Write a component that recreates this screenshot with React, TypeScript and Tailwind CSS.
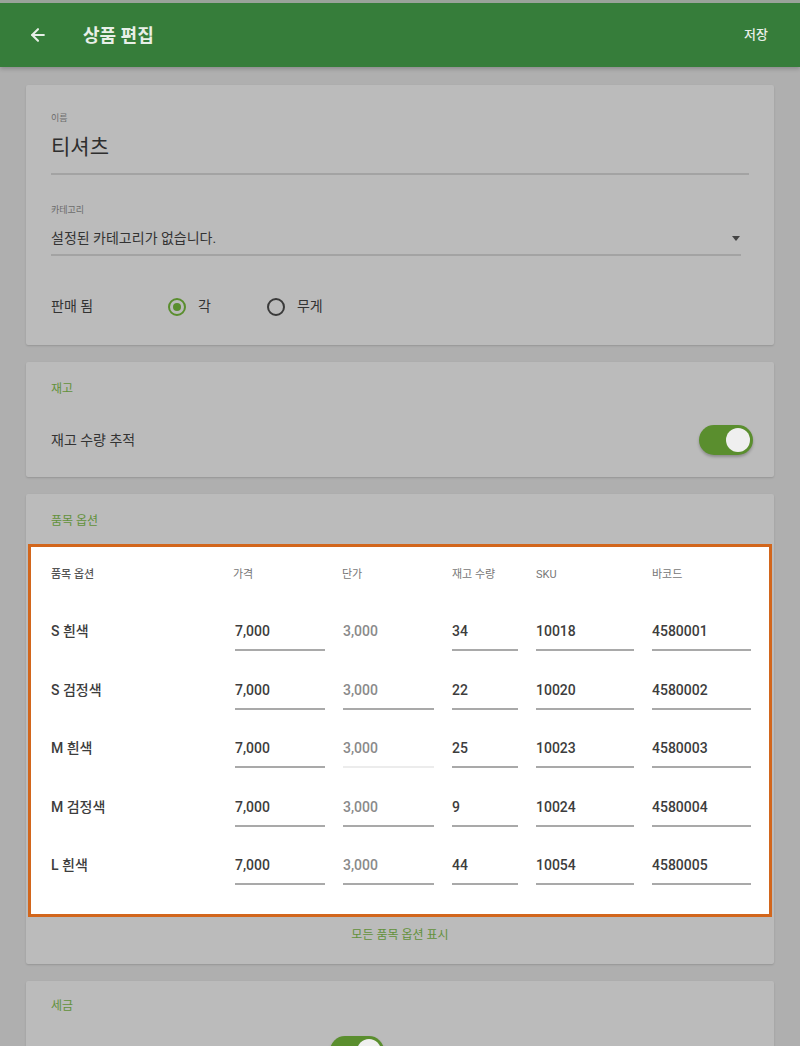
import { ArrowLeft } from "lucide-react";

const font = "font-['Roboto','Noto_Sans_CJK_KR',sans-serif]";

const rows = [
  { name: "S 흰색", price: "7,000", cost: "3,000", stock: "34", sku: "10018", barcode: "4580001", costLine: "none" },
  { name: "S 검정색", price: "7,000", cost: "3,000", stock: "22", sku: "10020", barcode: "4580002", costLine: "full" },
  { name: "M 흰색", price: "7,000", cost: "3,000", stock: "25", sku: "10023", barcode: "4580003", costLine: "faint" },
  { name: "M 검정색", price: "7,000", cost: "3,000", stock: "9", sku: "10024", barcode: "4580004", costLine: "full" },
  { name: "L 흰색", price: "7,000", cost: "3,000", stock: "44", sku: "10054", barcode: "4580005", costLine: "full" },
];

function Cell({ value, muted, line = "full" }: { value: string; muted?: boolean; line?: string }) {
  const border =
    line === "none" ? "border-transparent" : line === "faint" ? "border-[#ececec]" : "border-[#a9a9a9]";
  return (
    <div className={`border-b-2 pb-[8px] ${border}`}>
      <span className={`block text-[14px] leading-[20px] font-medium ${muted ? "text-[#8a8a8a]" : "text-[#3d3d3d]"}`}>
        {value}
      </span>
    </div>
  );
}

function Toggle() {
  return (
    <div className="relative w-[54px] h-[30px] rounded-full bg-[#5a8e2e] shadow-[0_2px_3px_rgba(0,0,0,0.25)]">
      <div className="absolute right-[3px] top-[3px] w-[24px] h-[24px] rounded-full bg-[#efefef]" />
    </div>
  );
}

export default function App() {
  return (
    <div className={`w-[800px] h-[1046px] overflow-hidden bg-[#afafaf] ${font}`}>
      {/* App bar */}
      <header className="h-[67px] border-t-[3px] border-[#9aa39a] bg-[#367d3a] flex items-center px-[28px] shadow-[0_2px_4px_rgba(0,0,0,0.2)]">
        <ArrowLeft className="w-[20px] h-[20px] text-[#e8efe8]" strokeWidth={2.5} />
        <h1 className="ml-[35px] text-[18px] font-bold text-[#e8efe8]">상품 편집</h1>
        <button className="ml-auto mr-[4px] text-[13px] font-medium text-[#e8efe8]">저장</button>
      </header>

      <main className="px-[26px] pt-[18px] flex flex-col gap-[17px]">
        {/* Basic info */}
        <section className="h-[260px] bg-[#bbbbbb] rounded-[2px] shadow-[0_1px_2px_rgba(0,0,0,0.15)] px-[25px] pt-[27px]">
          <p className="text-[9px] leading-[12px] text-[#6b6b6b]">이름</p>
          <p className="mt-[9px] text-[21px] leading-[28px] text-[#2e2e2e]">티셔츠</p>
          <div className="mt-[12px] h-[2px] bg-[#a3a3a3]" />

          <p className="mt-[29px] text-[9px] leading-[12px] text-[#6b6b6b]">카테고리</p>
          <div className="mt-[12px] mr-[8px] flex items-center border-b-2 border-[#a3a3a3] pb-[6px]">
            <span className="text-[14px] leading-[20px] text-[#333]">설정된 카테고리가 없습니다.</span>
            <span className="ml-auto mr-[1px] w-0 h-0 border-l-[4px] border-r-[4px] border-t-[5px] border-l-transparent border-r-transparent border-t-[#444]" />
          </div>

          <div className="mt-[40px] flex items-center text-[14px] text-[#333]">
            <span className="w-[117px]">판매 됨</span>
            <span className="w-[18px] h-[18px] rounded-full border-2 border-[#5a8e2e] flex items-center justify-center">
              <span className="w-[8px] h-[8px] rounded-full bg-[#5a8e2e]" />
            </span>
            <span className="ml-[12px]">각</span>
            <span className="ml-[56px] w-[18px] h-[18px] rounded-full border-2 border-[#3a3a3a]" />
            <span className="ml-[12px]">무게</span>
          </div>
        </section>

        {/* Inventory */}
        <section className="h-[115px] bg-[#bbbbbb] rounded-[2px] shadow-[0_1px_2px_rgba(0,0,0,0.15)] px-[25px] pt-[19px]">
          <p className="text-[12px] leading-[16px] text-[#62913a]">재고</p>
          <div className="mt-[28px] flex items-center justify-between">
            <span className="text-[14px] text-[#333]">재고 수량 추적</span>
            <div className="-mr-[4px]">
              <Toggle />
            </div>
          </div>
        </section>

        {/* Variants */}
        <section className="bg-[#bbbbbb] rounded-[2px] shadow-[0_1px_2px_rgba(0,0,0,0.15)] pt-[19px] pb-[21px]">
          <p className="px-[25px] text-[12px] leading-[16px] text-[#62913a]">품목 옵션</p>
          <div className="mt-[15px] mx-[2px] bg-white border-[3px] border-[#d2661c] px-[20px] pt-[20px] pb-[29px]">
            <div className="grid grid-cols-[166px_90px_91px_66px_98px_99px] gap-x-[18px] text-[11px] leading-[16px] text-[#777]">
              <span className="font-medium text-[#555]">품목 옵션</span>
              <span className="-ml-[2px]">가격</span>
              <span className="-ml-[1px]">단가</span>
              <span>재고 수량</span>
              <span>SKU</span>
              <span>바코드</span>
            </div>
            <div className="mt-[38px] flex flex-col gap-[28.5px]">
              {rows.map((r) => (
                <div key={r.name} className="grid grid-cols-[166px_90px_91px_66px_98px_99px] gap-x-[18px] items-start">
                  <span className="text-[14px] leading-[20px] font-medium text-[#3d3d3d]">{r.name}</span>
                  <Cell value={r.price} />
                  <Cell value={r.cost} muted line={r.costLine} />
                  <Cell value={r.stock} />
                  <Cell value={r.sku} />
                  <Cell value={r.barcode} />
                </div>
              ))}
            </div>
          </div>
          <p className="mt-[10px] text-center text-[12px] leading-[16px] text-[#62913a]">모든 품목 옵션 표시</p>
        </section>

        {/* Tax */}
        <section className="h-[120px] bg-[#bbbbbb] rounded-[2px] shadow-[0_1px_2px_rgba(0,0,0,0.15)] px-[25px] pt-[17px]">
          <p className="text-[12px] leading-[16px] text-[#62913a]">세금</p>
          <div className="mt-[22px] ml-[279px]">
            <Toggle />
          </div>
        </section>
      </main>
    </div>
  );
}
